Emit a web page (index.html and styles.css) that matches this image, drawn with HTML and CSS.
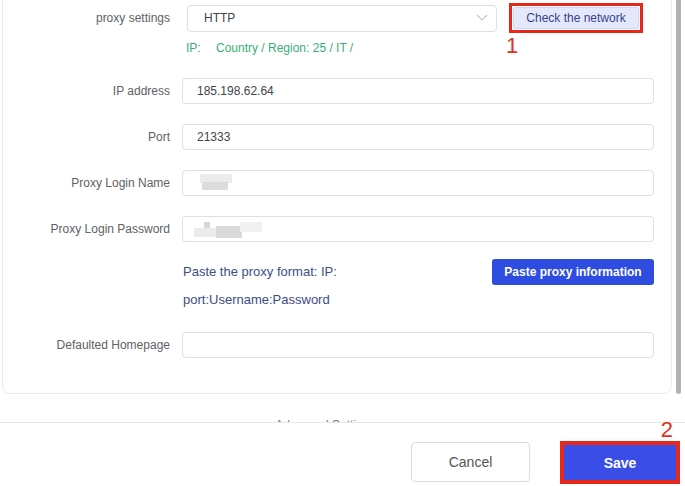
FILE: index.html
```html
<!DOCTYPE html>
<html lang="en">
<head>
  <meta charset="UTF-8">
  <meta name="viewport" content="width=device-width, initial-scale=1.0">
  <title>Proxy settings</title>
  <link rel="stylesheet" href="styles.css">
</head>
<body>
  <div class="viewport">
    <div class="content">
      <div class="card">
        <div class="row proxy-row">
          <label class="label">proxy settings</label>
          <div class="control proxy-control">
            <div class="select">
              <span>HTTP</span>
              <svg class="chevron" width="12" height="8" viewBox="0 0 12 8"><polyline points="1,1 6,6 11,1" fill="none" stroke="#c8c8c8" stroke-width="1.2"/></svg>
            </div>
            <div class="mark mark-check">
              <button class="check-btn">Check the network</button>
            </div>
            <span class="num num-1">1</span>
          </div>
        </div>
        <div class="ip-info"><span class="ip-key">IP:</span>Country / Region: 25 / IT /</div>

        <div class="row field">
          <label class="label">IP address</label>
          <div class="input">185.198.62.64</div>
        </div>
        <div class="row field">
          <label class="label">Port</label>
          <div class="input">21333</div>
        </div>
        <div class="row field">
          <label class="label">Proxy Login Name</label>
          <div class="input">
            <span class="blur blur-name"><i class="b1"></i><i class="b2"></i></span>
          </div>
        </div>
        <div class="row field">
          <label class="label">Proxy Login Password</label>
          <div class="input">
            <span class="blur blur-pass"><i class="p1"></i><i class="p2"></i><i class="p3"></i><i class="p4"></i></span>
          </div>
        </div>

        <div class="row paste-row">
          <span></span>
          <div class="paste">
            <p class="paste-text">Paste the proxy format: IP:<br>port:Username:Password</p>
            <button class="paste-btn">Paste proxy information</button>
          </div>
        </div>

        <div class="row field homepage">
          <label class="label">Defaulted Homepage</label>
          <div class="input"></div>
        </div>
      </div>
      <div class="advanced">Advanced Setting &#9662;</div>
    </div>
    <div class="scrollbar"></div>
  </div>

  <div class="footer">
    <button class="cancel-btn">Cancel</button>
    <div class="mark mark-save">
      <button class="save-btn">Save</button>
    </div>
    <span class="num num-2">2</span>
  </div>
</body>
</html>
```

FILE: styles.css
```css
body {
  margin: 0;
  padding: 0;
  background: #fff;
  font-family: "Liberation Sans", Arial, sans-serif;
  font-size: 12px;
  color: #444;
}
.viewport {
  display: flex;
  height: 422px;
  overflow: hidden;
  padding-left: 2px;
}
.content {
  width: 670px;
}
.card {
  margin-top: -20px;
  padding: 22px 17px 35px 0;
  border: 1px solid #ececec;
  border-radius: 8px;
}
.scrollbar {
  width: 5px;
  height: 394px;
  margin-left: 4px;
  background: #b3b3b3;
  border-radius: 0 0 3px 3px;
}
.row {
  display: grid;
  grid-template-columns: 167px 1fr;
  column-gap: 12px;
  align-items: center;
}
.label {
  text-align: right;
  color: #5f6166;
}
.proxy-row {
  height: 30px;
}
.proxy-control {
  display: flex;
  align-items: center;
  position: relative;
}
.select {
  box-sizing: border-box;
  width: 310px;
  height: 27px;
  margin-left: 5px;
  padding: 0 8px 0 16px;
  border: 1px solid #dcdfe6;
  border-radius: 4px;
  display: flex;
  align-items: center;
  justify-content: space-between;
  color: #444;
}
.mark {
  border: 3px solid #e5281a;
}
.mark-check {
  margin-left: 12px;
  padding: 1px;
  background: #fff;
}
.check-btn {
  display: block;
  width: 126px;
  height: 22px;
  border: 1px solid #d3d8f1;
  border-radius: 2px;
  background: #e5e8fa;
  color: #35448c;
  font-family: inherit;
  font-size: 12px;
  padding: 0;
}
.num {
  position: absolute;
  color: #e0301e;
  font-size: 22px;
  line-height: 22px;
}
.num-1 {
  left: 324px;
  top: 32px;
}
.ip-info {
  margin: 8px 0 0 183px;
  line-height: 14px;
  color: #3aae78;
}
.ip-key {
  display: inline-block;
  width: 30px;
}
.field {
  margin-top: 20px;
}
.ip-info + .field {
  margin-top: 23px;
}
.input {
  box-sizing: border-box;
  height: 26px;
  padding: 0 14px;
  border: 1px solid #dcdfe6;
  border-radius: 4px;
  display: flex;
  align-items: center;
  color: #444;
}
.blur {
  position: relative;
  display: inline-block;
  height: 18px;
}
.blur i {
  position: absolute;
  display: block;
}
.blur-name {
  width: 34px;
  margin-left: 3px;
}
.blur-name .b1 { left: 0; top: 0; width: 32px; height: 9px; background: #ececec; }
.blur-name .b2 { left: 2px; top: 8px; width: 26px; height: 8px; background: #dcdcdc; }
.blur-pass {
  width: 70px;
  margin-left: -3px;
}
.blur-pass .p1 { left: 10px; top: 2px; width: 6px; height: 6px; background: #d6d6d6; }
.blur-pass .p2 { left: 0; top: 8px; width: 24px; height: 9px; background: #ebebeb; }
.blur-pass .p3 { left: 22px; top: 6px; width: 26px; height: 12px; background: #dadada; }
.blur-pass .p4 { left: 46px; top: 2px; width: 22px; height: 10px; background: #f0f0f0; }
.paste-row {
  margin-top: 16px;
  align-items: start;
}
.paste {
  display: flex;
  justify-content: space-between;
  align-items: flex-start;
}
.paste-text {
  margin: 0 0 0 1px;
  font-size: 13px;
  line-height: 28px;
  color: #3e4c85;
}
.paste-btn {
  width: 162px;
  height: 26px;
  margin-top: 1px;
  border: none;
  border-radius: 3px;
  background: #2e4de0;
  color: #fff;
  font-family: inherit;
  font-size: 12px;
  font-weight: bold;
}
.homepage {
  margin-top: 18px;
}
.advanced {
  margin-top: 24px;
  text-align: center;
  color: #777;
  font-size: 12px;
  padding-right: 20px;
}
.footer {
  position: relative;
  height: 63px;
  border-top: 1px solid #e6e6e6;
  display: flex;
  align-items: flex-start;
  justify-content: flex-end;
  padding-right: 5px;
}
.cancel-btn {
  width: 119px;
  height: 40px;
  margin-top: 19px;
  margin-right: 30px;
  border: 1px solid #dcdcdc;
  border-radius: 4px;
  background: #fff;
  color: #555;
  font-family: inherit;
  font-size: 14px;
}
.mark-save {
  margin-top: 18px;
  border-width: 4px;
}
.save-btn {
  display: block;
  width: 112px;
  height: 35px;
  border: none;
  background: #3a4de6;
  color: #fff;
  font-family: inherit;
  font-size: 14px;
  font-weight: bold;
}
.num-2 {
  right: 12px;
  top: -4px;
}
```
